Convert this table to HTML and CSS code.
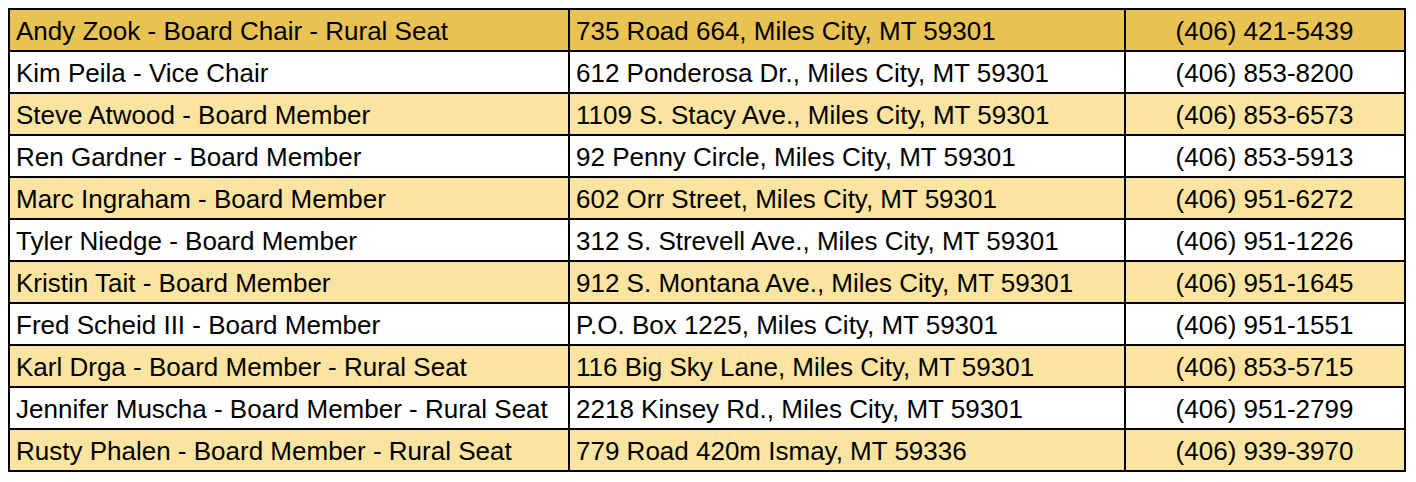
FILE: index.html
```
<!DOCTYPE html>
<html lang="en">
<head>
<meta charset="utf-8">
<title>Board Members</title>
<link rel="stylesheet" href="styles.css">
</head>
<body>
<table class="board">
  <colgroup>
    <col class="c-name">
    <col class="c-addr">
    <col class="c-phone">
  </colgroup>
  <tbody>
    <tr class="row head"><td>Andy Zook - Board Chair - Rural Seat</td><td>735 Road 664, Miles City, MT 59301</td><td class="phone">(406) 421-5439</td></tr>
    <tr class="row plain"><td>Kim Peila - Vice Chair</td><td>612 Ponderosa Dr., Miles City, MT 59301</td><td class="phone">(406) 853-8200</td></tr>
    <tr class="row band"><td>Steve Atwood - Board Member</td><td>1109 S. Stacy Ave., Miles City, MT 59301</td><td class="phone">(406) 853-6573</td></tr>
    <tr class="row plain"><td>Ren Gardner - Board Member</td><td>92 Penny Circle, Miles City, MT 59301</td><td class="phone">(406) 853-5913</td></tr>
    <tr class="row band"><td>Marc Ingraham - Board Member</td><td>602 Orr Street, Miles City, MT 59301</td><td class="phone">(406) 951-6272</td></tr>
    <tr class="row plain"><td>Tyler Niedge - Board Member</td><td>312 S. Strevell Ave., Miles City, MT 59301</td><td class="phone">(406) 951-1226</td></tr>
    <tr class="row band"><td>Kristin Tait - Board Member</td><td>912 S. Montana Ave., Miles City, MT 59301</td><td class="phone">(406) 951-1645</td></tr>
    <tr class="row plain"><td>Fred Scheid III - Board Member</td><td>P.O. Box 1225, Miles City, MT 59301</td><td class="phone">(406) 951-1551</td></tr>
    <tr class="row band"><td>Karl Drga - Board Member - Rural Seat</td><td>116 Big Sky Lane, Miles City, MT 59301</td><td class="phone">(406) 853-5715</td></tr>
    <tr class="row plain"><td>Jennifer Muscha - Board Member - Rural Seat</td><td>2218 Kinsey Rd., Miles City, MT 59301</td><td class="phone">(406) 951-2799</td></tr>
    <tr class="row band"><td>Rusty Phalen - Board Member - Rural Seat</td><td>779 Road 420m Ismay, MT 59336</td><td class="phone">(406) 939-3970</td></tr>
  </tbody>
</table>
</body>
</html>
```
FILE: styles.css
```
html, body {
  background: #ffffff;
}
body {
  margin: 8px;
  font-family: "Liberation Sans", Arial, sans-serif;
  color: #000000;
}
.board {
  border-collapse: separate;
  border-spacing: 0;
  table-layout: fixed;
  width: 1398px;
  border-top: 2px solid #000;
  border-left: 2px solid #000;
}
.c-name { width: 560px; }
.c-addr { width: 556px; }
.c-phone { width: 280px; }
.board td {
  box-sizing: border-box;
  height: 42px;
  padding: 2px 7px 0 6px;
  border-right: 2px solid #000;
  border-bottom: 2px solid #000;
  font-size: 26px;
  line-height: 30px;
  white-space: nowrap;
  vertical-align: middle;
}
.board td.phone {
  text-align: center;
}
.head td { background: #e8c253; }
.band td { background: #fbe4a0; }
.plain td { background: #ffffff; }
```
